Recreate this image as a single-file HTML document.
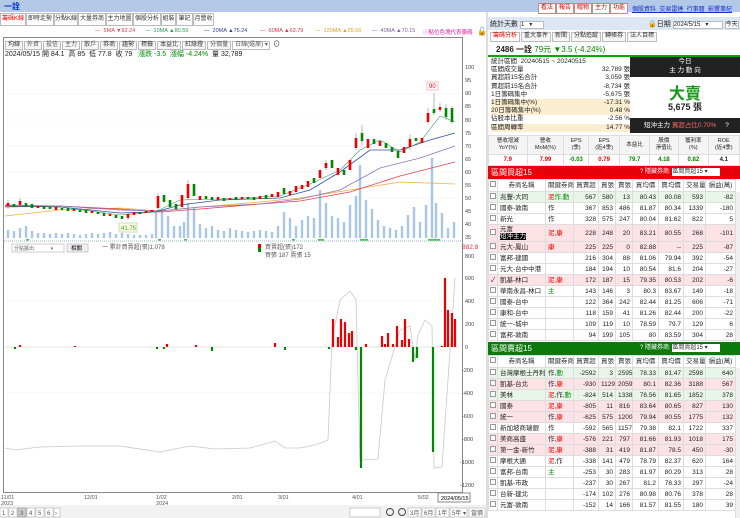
<!DOCTYPE html><html><head><meta charset="utf-8"><style>
*{margin:0;padding:0;box-sizing:border-box}
body{width:740px;height:518px;overflow:hidden;background:#fff;font-family:"Liberation Sans","Noto Sans CJK TC",sans-serif;font-size:7px;color:#222;position:relative}
.a{position:absolute;white-space:nowrap}
.tab{position:absolute;top:13px;height:13px;border:1px solid #bbb;background:#fff;font-size:6px;line-height:11px;text-align:center;color:#333;white-space:nowrap;overflow:hidden}
.tb{display:inline-block;border:1px solid #bbb;padding:0 2px;margin-right:1px;height:9px;line-height:7px;font-size:6px;color:#555;background:#f7f7f7}
table{border-collapse:collapse;font-size:6.5px}
td{border:1px solid #ddd;height:11px;line-height:9px;padding:0 2px;text-align:right;white-space:nowrap}
td.n{text-align:left}
td.c{text-align:center;padding:0}
.ck{display:inline-block;width:6px;height:6px;border:1px solid #999;background:#fff}
.r{color:#e00}.g{color:#080}
.pk td{background:#fde3e6}.gn td{background:#eaf5ea}
.hd td{text-align:center;color:#333;background:#fff;height:12px}
.btn{position:absolute;top:3px;height:11px;width:18px;background:#fff;border:1px solid #c88;color:#d00;font-size:6px;line-height:9px;text-align:center}
</style></head><body>
<!-- top bar -->
<div class="a" style="left:0;top:0;width:740px;height:12px;background:#b4c9e8"></div>
<div class="a" style="left:4px;top:1px;font-size:8px;color:#0033cc;font-weight:bold">一詮</div>
<!-- tabs -->
<div class="tab r" style="left:0;width:26px;color:#e00">籌碼K線</div>
<div class="tab" style="left:26px;width:28px">即時走勢</div>
<div class="tab" style="left:54px;width:24px">分點K線</div>
<div class="tab" style="left:78px;width:28px">大量券商</div>
<div class="tab" style="left:106px;width:27px">主力地圖</div>
<div class="tab" style="left:133px;width:28px">個股分析</div>
<div class="tab" style="left:161px;width:15px">組裝</div>
<div class="tab" style="left:176px;width:17px">筆記</div>
<div class="tab" style="left:193px;width:21px">月營收</div>
<!-- MA legend -->
<div class="a" style="top:28px;left:95px;font-size:5.5px;color:#e04050">— &nbsp;5MA ▼82.24</div>
<div class="a" style="top:28px;left:145px;font-size:5.5px;color:#2a9a60">— &nbsp;10MA ▲80.59</div>
<div class="a" style="top:28px;left:204px;font-size:5.5px;color:#3040a0">— &nbsp;20MA ▲75.24</div>
<div class="a" style="top:28px;left:260px;font-size:5.5px;color:#e03050">— &nbsp;60MA ▲63.79</div>
<div class="a" style="top:28px;left:315px;font-size:5.5px;color:#e0a020">— &nbsp;120MA ▲55.06</div>
<div class="a" style="top:28px;left:372px;font-size:5.5px;color:#8060b0">— &nbsp;40MA ▲70.15</div>
<div class="a" style="top:28px;left:423px;font-size:5.5px;color:#e020a0">ⓘ點位色塊代表籌碼</div>
<div class="a" style="top:27px;left:477px;font-size:8px">🔓</div>
<!-- chart box -->
<div class="a" style="left:3px;top:37px;width:460px;height:456px;border:1px solid #888"></div>
<div class="a" style="left:5px;top:39px"><span class="tb" style="color:#333">均線</span><span class="tb">外資</span><span class="tb">投信</span><span class="tb">主力</span><span class="tb">散戶</span><span class="tb" style="color:#333">券商</span><span class="tb" style="color:#333">趨勢</span><span class="tb" style="color:#333">標籤</span><span class="tb" style="color:#333">本益比</span><span class="tb" style="color:#333">紅綠燈</span><span class="tb">分價量</span><span class="tb" style="width:38px;background:#fff">日線(還原) ▾</span> ⊙</div>
<div class="a" style="left:5px;top:49px;font-size:7px">2024/05/15 開 84.1 &nbsp;高 85 &nbsp;低 77.8 &nbsp;收 79 &nbsp;&nbsp;<span class="g">漲跌 -3.5 &nbsp;漲幅 -4.24%</span> &nbsp;量 32,789</div>
<svg class="a" style="left:0;top:0" width="487" height="518">
<g stroke="#f0f0f0" stroke-width="0.6"><line x1="5" y1="93.7" x2="460" y2="93.7"/><line x1="5" y1="120" x2="460" y2="120"/><line x1="5" y1="146" x2="460" y2="146"/><line x1="5" y1="172" x2="460" y2="172"/><line x1="5" y1="198" x2="460" y2="198"/><line x1="5" y1="301" x2="460" y2="301"/><line x1="5" y1="393" x2="460" y2="393"/></g>
<path stroke="#a8c6e6" stroke-width="2.4" fill="none" d="M8 238V230M14 238V231M20 238V228M26 238V226M32 238V231M38 238V233M44 238V233M50 238V234M56 238V233M62 238V234M68 238V233M74 238V234M80 238V235M86 238V234M92 238V233M98 238V234M104 238V233M110 238V232M116 238V234M122 238V233M128 238V234M134 238V235M140 238V235M146 238V235M152 238V234M156 238V212M162 238V210M168 238V216M174 238V226M180 238V226M184 238V222M188 238V203M194 238V208M200 238V224M206 238V228M212 238V226M218 238V230M224 238V231M230 238V228M236 238V230M242 238V231M248 238V232M254 238V231M260 238V230M266 238V231M272 238V232M278 238V226M284 238V212M290 238V218M296 238V226M302 238V220M308 238V216M314 238V218M320 238V190M326 238V203M332 238V216M338 238V218M344 238V222M350 238V205M356 238V196M360 238V165M366 238V200M372 238V209M378 238V220M384 238V226M390 238V228M396 238V230M402 238V226M408 238V215M414 238V207M420 238V222M426 238V205M432 238V158M436 238V203M442 238V213M448 238V228M454 238V222"/>
<polyline fill="none" stroke="#f0b040" stroke-width="0.8" points="5,216 60,210 120,208 160,211 200,207 260,202 300,198 350,190 400,182 455,184"/>
<polyline fill="none" stroke="#e04050" stroke-width="0.8" points="5,207 60,206 120,209 160,212 200,209 260,204 300,201 350,192 400,176 455,162"/>
<polyline fill="none" stroke="#9070c0" stroke-width="0.8" points="5,205 60,206 120,210 160,211 200,207 260,204 300,199 340,190 380,168 420,158 455,146"/>
<polyline fill="none" stroke="#3050a0" stroke-width="0.8" points="5,206 60,207 120,213 155,212 180,205 220,200 280,198 310,190 340,172 370,150 400,150 430,140 455,133"/>
<polyline fill="none" stroke="#3a9a6a" stroke-width="0.6" points="5,205 60,207 120,215 155,212 180,200 220,199 280,196 310,184 340,170 360,150 380,140 400,152 420,142 440,116 455,122"/>
<path stroke="#888" stroke-width="0.6" d="M8 200V209M20 198V207M128 212V220M158 193V210M188 180V200M356 133V150M362 125V145M434 93V115M440 103V112M446 104V120M452 106V124M326 160V170M410 134V150M428 108V124"/>
<path stroke="#e00" stroke-width="2.6" d="M8 203V206M20 201V205M38 206V208M56 207V210M74 209V211M92 211V213M110 214V216M128 214V218M134 212V215M146 211V213M152 210V212M158 196V208M182 195V207M188 184V198M200 196V200M218 197V200M230 198V200M242 197V199M260 196V199M272 194V197M278 192V197M290 191V195M296 186V192M302 185V189M308 181V187M320 170V178M326 163V168M338 168V175M350 160V170M356 138V148M368 139V148M380 141V146M404 147V153M410 139V147M422 138V143M428 113V122M440 107V110"/>
<path stroke="#080" stroke-width="2.6" d="M14 204V207M26 203V206M32 204V208M44 206V209M50 207V209M62 208V210M68 208V211M80 210V212M86 210V213M98 212V214M104 213V216M116 215V218M122 216V219M140 212V214M164 195V202M170 200V207M176 204V209M194 184V196M206 196V199M212 197V200M224 198V201M236 197V200M248 197V199M254 197V200M266 195V199M284 188V194M314 178V183M332 160V168M344 170V175M362 133V141M374 139V144M386 143V148M392 147V152M398 151V158M416 138V141M434 109V113M446 108V117M452 108V122"/>
<rect x="119" y="223" width="18" height="9" fill="#fffbe0" stroke="#cdb"/><text x="121" y="230" font-size="6" fill="#3a3">41.75</text>
<rect x="427" y="82" width="11" height="8" fill="#fff" stroke="#fbb"/><text x="429" y="88" font-size="6" fill="#e00">90</text>
<g fill="#4c4"><rect x="26" y="239" width="3" height="2"/><rect x="158" y="239" width="3" height="2"/><rect x="184" y="239" width="3" height="2"/><rect x="292" y="239" width="3" height="2"/><rect x="318" y="239" width="6" height="2"/><rect x="360" y="239" width="8" height="2"/><rect x="428" y="239" width="12" height="2"/></g>
<line x1="4" y1="241" x2="462" y2="241" stroke="#bcd" stroke-width="1.5" stroke-dasharray="1,1"/>
<g font-size="5.5" fill="#444"><text x="465" y="69">100</text><text x="465" y="82">95</text><text x="465" y="95">90</text><text x="465" y="108">85</text><text x="465" y="122">80</text><text x="465" y="135">75</text><text x="465" y="148">70</text><text x="465" y="161">65</text><text x="465" y="174">60</text><text x="465" y="187">55</text><text x="465" y="200">50</text><text x="465" y="213">45</text><text x="465" y="226">40</text><text x="465" y="239">35</text>
<text x="465" y="258">800</text><text x="465" y="280">600</text><text x="465" y="303">400</text><text x="465" y="326">200</text><text x="465" y="349">0</text><text x="462" y="372">-200</text><text x="462" y="395">-400</text><text x="462" y="418">-600</text><text x="462" y="441">-800</text><text x="460" y="464">-1000</text><text x="460" y="487">-1200</text></g>
<text x="462" y="249" font-size="6.5" fill="#d33">882.8</text>
<line x1="5" y1="347" x2="460" y2="347" stroke="#ccc" stroke-width="0.6"/>
<polyline fill="none" stroke="#c8c8c8" stroke-width="0.8" points="5,448 15,450 40,447 80,446 120,446 160,452 190,446 215,449 250,448 275,441 285,448 300,448 315,445 328,440 332,340 340,300 350,291 356,300 360,460 378,459 385,380 400,330 410,326 415,360 418,335 425,320 432,326 434,468 442,467 455,278"/>
<path stroke="#e00" stroke-width="2.2" d="M333 347V319M338 347V337M341 347V319M345 347V322M349 347V333M352 347V331M366 347V344M382 347V336M385 347V344M388 347V333M393 347V344M397 347V326M402 347V340M405 347V319M409 347V339M442 347V346M445 347V278M448 347V310M452 347V313M455 347V319M275 347V343M167 347V344M20 347V345M75 347V346M196 347V345"/>
<path stroke="#080" stroke-width="2.2" d="M361 347V468M356 347V350M413 347V362M417 347V358M433 347V452M15 347V349M157 347V349M164 347V349M212 347V351M285 347V350M329 347V349"/>
<rect x="12" y="244" width="52" height="8" fill="#fff" stroke="#ccc"/><text x="14" y="250" font-size="5" fill="#666">分點擺出 &#160;&#160;&#160;&#160;&#160;&#160;&#160;&#160;&#160;&#160;&#160;▾</text>
<rect x="67" y="244" width="21" height="8" fill="#eee" stroke="#ccc"/><text x="71" y="250" font-size="5.5">相關</text>
<text x="102" y="249" font-size="6" fill="#555">一 累計買賣超(張)1,078</text>
<rect x="258" y="244" width="3" height="4" fill="#e00"/><rect x="258" y="248" width="3" height="4" fill="#080"/>
<text x="265" y="249" font-size="6" fill="#555">買賣超(張)172</text><text x="265" y="257" font-size="6" fill="#555">買張 187 賣張 15</text>
<g font-size="5.5" fill="#555"><text x="1" y="499">11/01</text><text x="1" y="505">2023</text><text x="84" y="499">12/01</text><text x="156" y="499">1/02</text><text x="156" y="505">2024</text><text x="232" y="499">2/01</text><text x="278" y="499">3/01</text><text x="352" y="499">4/01</text><text x="418" y="499">5/02</text></g>
<rect x="438" y="493" width="32" height="9" fill="#fff" stroke="#888"/><text x="441" y="500" font-size="5.5">2024/05/15</text>
<rect x="0" y="505" width="487" height="13" fill="#f2f2f2"/>
<g font-size="6" fill="#555"><rect x="0" y="508" width="8" height="9" fill="#fff" stroke="#ccc"/><text x="2" y="515">1</text><rect x="9" y="508" width="8" height="9" fill="#fff" stroke="#ccc"/><text x="11" y="515">2</text><rect x="18" y="508" width="8" height="9" fill="#ccc" stroke="#aaa"/><text x="20" y="515">3</text><rect x="27" y="508" width="8" height="9" fill="#fff" stroke="#ccc"/><text x="29" y="515">4</text><rect x="36" y="508" width="8" height="9" fill="#fff" stroke="#ccc"/><text x="38" y="515">5</text><rect x="45" y="508" width="8" height="9" fill="#fff" stroke="#ccc"/><text x="47" y="515">6</text><rect x="54" y="508" width="6" height="9" fill="#fff" stroke="#ccc"/><text x="55" y="515">›</text>
<rect x="350" y="508" width="30" height="9" fill="#fff" stroke="#ccc"/><circle cx="390" cy="512" r="3.5" fill="none" stroke="#444"/><circle cx="402" cy="512" r="3.5" fill="none" stroke="#444"/>
<rect x="408" y="508" width="13" height="9" fill="#fff" stroke="#ccc"/><text x="410" y="515">3月</text><rect x="422" y="508" width="13" height="9" fill="#fff" stroke="#ccc"/><text x="424" y="515">6月</text><rect x="436" y="508" width="13" height="9" fill="#fff" stroke="#ccc"/><text x="438" y="515">1年</text><rect x="450" y="508" width="17" height="9" fill="#fff" stroke="#ccc"/><text x="452" y="515">5年 ▾</text><rect x="469" y="508" width="16" height="9" fill="#fff" stroke="#ccc"/><text x="471" y="515">當價</text></g>
</svg>
<div class="a" style="left:486px;top:12px;width:2px;height:506px;background:#ddd"></div>

<!-- RIGHT PANEL -->
<div class="btn" style="left:538px">看法</div><div class="btn" style="left:556px">報告</div><div class="btn" style="left:574px">贈物</div><div class="btn" style="left:592px">主力</div><div class="btn" style="left:610px">功能</div>
<div class="a" style="left:632px;top:4px;font-size:6px;color:#13c;text-decoration:underline">個股資料 &nbsp;交易雷達 &nbsp;行事曆 &nbsp;影響事紀</div>
<div class="a" style="left:488px;top:17px;width:252px;height:13px;background:#dde7f3"></div>
<div class="a" style="left:490px;top:19px;font-size:7px">統計天數 <span style="display:inline-block;width:24px;height:8px;background:#fff;border:1px solid #bbb;font-size:6px;line-height:6px">1 &nbsp;&nbsp;▾</span></div>
<div class="a" style="left:648px;top:19px;font-size:7px">🔒日期 <span style="display:inline-block;width:50px;height:8px;background:#fff;border:1px solid #bbb;font-size:6px;line-height:6px">2024/5/15 &nbsp;&nbsp;▾</span> <span style="display:inline-block;width:14px;height:8px;background:#fff;border:1px solid #bbb;font-size:6px;line-height:6px">今天</span></div>
<div class="a" style="left:490px;top:32px;font-size:6.5px"><span class="tb" style="color:#e00;background:#fff;height:10px">籌碼分析</span><span class="tb" style="color:#333;height:10px">重大事件</span><span class="tb" style="color:#333;height:10px">新聞</span><span class="tb" style="color:#333;height:10px">分點追蹤</span><span class="tb" style="color:#333;height:10px">轉帳券</span><span class="tb" style="color:#333;height:10px">法人目標</span></div>
<div class="a" style="left:496px;top:44px;font-size:8px;font-weight:bold">2486 一詮 <span class="g" style="font-weight:normal">79元 ▼3.5 (-4.24%)</span></div>
<div class="a" style="left:488px;top:55px;width:252px;height:2px;background:#0a0"></div>
<div class="a" style="left:491px;top:58px;font-size:6.5px;line-height:8.2px;width:139px">
<div>統計區間 &nbsp;20240515 ~ 20240515</div>
<div>區間成交量<span style="float:right">32,789 張</span></div>
<div>買超前15名合計<span style="float:right">3,059 張</span></div>
<div>賣超前15名合計<span style="float:right">-8,734 張</span></div>
<div>1日籌碼集中<span style="float:right">-5,675 張</span></div>
<div style="background:#fbeed0">1日籌碼集中(%)<span style="float:right">-17.31 %</span></div>
<div style="background:#fbeed0">20日籌碼集中(%)<span style="float:right">0.48 %</span></div>
<div>佔股本比重<span style="float:right">-2.56 %</span></div>
<div style="background:#fbeed0">區間周轉率<span style="float:right">14.77 %</span></div></div>
<div class="a" style="left:630px;top:57px;width:110px;height:20px;background:#222;color:#fff;text-align:center;font-size:6.5px;line-height:9px">今日<br>主 力 動 向</div>
<div class="a" style="left:630px;top:80px;width:110px;text-align:center;font-size:16px;font-weight:bold;color:#1a9a1a">大賣</div>
<div class="a" style="left:630px;top:100px;width:110px;text-align:center;font-size:9px;font-weight:bold">5,675 張</div>
<div class="a" style="left:630px;top:118px;width:110px;height:15px;background:#222;color:#fff;font-size:6.5px;line-height:15px;padding-left:14px">短沖主力 <span style="color:#f66">買超占比0.70%</span> &nbsp;&nbsp;&nbsp;&nbsp;?</div>
<div class="a" style="left:488px;top:135px">
<table style="width:252px;font-size:5.5px;text-align:center"><tr style="background:#f4f4f4"><td class="c" style="height:19px;line-height:7px">營收增減<br>YoY(%)</td><td class="c" style="line-height:7px">營收<br>MoM(%)</td><td class="c" style="line-height:7px">EPS<br>(季)</td><td class="c" style="line-height:7px">EPS<br>(近4季)</td><td class="c">本益比</td><td class="c" style="line-height:7px">股價<br>淨值比</td><td class="c" style="line-height:7px">獲利率<br>(%)</td><td class="c" style="line-height:7px">ROE<br>(近4季)</td></tr>
<tr style="font-weight:bold;font-size:6px"><td class="c r">7.9</td><td class="c r">7.99</td><td class="c g">-0.03</td><td class="c r">0.79</td><td class="c g">79.7</td><td class="c g">4.18</td><td class="c g">0.82</td><td class="c">4.1</td></tr></table></div>
<!-- buy table -->
<div class="a" style="left:488px;top:166px;width:252px;height:13px;background:#e8000a;color:#fff;font-size:8px;line-height:13px;padding-left:3px">區間買超15<span style="position:absolute;left:152px;font-size:6px">? 隱藏券商: <span style="display:inline-block;width:48px;height:8px;background:#fff;color:#333;line-height:8px">區間買超15 ▾</span></span></div>
<div class="a" style="left:488px;top:179px">
<table style="width:247px;table-layout:fixed"><col style="width:9px"><col style="width:48px"><col style="width:28px"><col style="width:25px"><col style="width:17px"><col style="width:17px"><col style="width:26px"><col style="width:25px"><col style="width:22px"><col style="width:30px">
<tr class="hd"><td class="c"><span class="ck"></span></td><td>券商名稱</td><td>關鍵券商</td><td>買賣超</td><td>買張</td><td>賣張</td><td>買均價</td><td>賣均價</td><td>交易量</td><td>損益(萬)</td></tr>
<tr class="gn"><td class="c"><span class="ck"></span></td><td class="n">兆豐-大同</td><td class="n"><span class="r">泥</span><span class="g">作,動</span></td><td>567</td><td>580</td><td>13</td><td>80.43</td><td>80.08</td><td>593</td><td>-82</td></tr>
<tr><td class="c"><span class="ck"></span></td><td class="n">國泰-敦南</td><td class="n">作</td><td>367</td><td>853</td><td>486</td><td>81.87</td><td>80.34</td><td>1339</td><td>-180</td></tr>
<tr><td class="c"><span class="ck"></span></td><td class="n">新光</td><td class="n">作</td><td>328</td><td>575</td><td>247</td><td>80.04</td><td>81.62</td><td>822</td><td>5</td></tr>
<tr class="pk"><td class="c" style="height:17px"><span class="ck"></span></td><td class="n" style="line-height:7px">元富<br><span style="background:#000;color:#fff">短沖主力</span></td><td class="n r">泥,康</td><td>228</td><td>248</td><td>20</td><td>83.21</td><td>80.55</td><td>268</td><td>-101</td></tr>
<tr class="pk"><td class="c"><span class="ck"></span></td><td class="n">元大-鳳山</td><td class="n r">康</td><td>225</td><td>225</td><td>0</td><td>82.88</td><td>--</td><td>225</td><td>-87</td></tr>
<tr><td class="c"><span class="ck"></span></td><td class="n">富邦-建國</td><td></td><td>216</td><td>304</td><td>88</td><td>81.06</td><td>79.94</td><td>392</td><td>-54</td></tr>
<tr><td class="c"><span class="ck"></span></td><td class="n">元大-台中中港</td><td></td><td>184</td><td>194</td><td>10</td><td>80.54</td><td>81.6</td><td>204</td><td>-27</td></tr>
<tr class="pk"><td class="c">✓</td><td class="n">凱基-林口</td><td class="n r">泥,康</td><td>172</td><td>187</td><td>15</td><td>79.35</td><td>80.53</td><td>202</td><td>-6</td></tr>
<tr><td class="c"><span class="ck"></span></td><td class="n">華南永昌-林口</td><td class="n g">主</td><td>143</td><td>146</td><td>3</td><td>80.3</td><td>83.67</td><td>149</td><td>-18</td></tr>
<tr><td class="c"><span class="ck"></span></td><td class="n">國泰-台中</td><td></td><td>122</td><td>364</td><td>242</td><td>82.44</td><td>81.25</td><td>606</td><td>-71</td></tr>
<tr><td class="c"><span class="ck"></span></td><td class="n">康和-台中</td><td></td><td>118</td><td>159</td><td>41</td><td>81.26</td><td>82.44</td><td>200</td><td>-22</td></tr>
<tr><td class="c"><span class="ck"></span></td><td class="n">統一-城中</td><td></td><td>109</td><td>119</td><td>10</td><td>78.59</td><td>79.7</td><td>129</td><td>6</td></tr>
<tr><td class="c"><span class="ck"></span></td><td class="n">富邦-敦南</td><td></td><td>94</td><td>199</td><td>105</td><td>80</td><td>83.59</td><td>304</td><td>28</td></tr>
</table></div>
<!-- sell table -->
<div class="a" style="left:488px;top:342px;width:252px;height:13px;background:#0a7a0a;color:#fff;font-size:8px;line-height:13px;padding-left:3px">區間賣超15<span style="position:absolute;left:152px;font-size:6px">? 隱藏券商: <span style="display:inline-block;width:48px;height:8px;background:#fff;color:#333;line-height:8px">區間賣超15 ▾</span></span></div>
<div class="a" style="left:488px;top:355px">
<table style="width:247px;table-layout:fixed"><col style="width:9px"><col style="width:48px"><col style="width:28px"><col style="width:25px"><col style="width:17px"><col style="width:17px"><col style="width:26px"><col style="width:25px"><col style="width:22px"><col style="width:30px">
<tr class="hd"><td class="c"><span class="ck"></span></td><td>券商名稱</td><td>關鍵券商</td><td>買賣超</td><td>買張</td><td>賣張</td><td>買均價</td><td>賣均價</td><td>交易量</td><td>損益(萬)</td></tr>
<tr class="gn"><td class="c"><span class="ck"></span></td><td class="n">台灣摩根士丹利</td><td class="n">作,<span class="g">動</span></td><td>-2592</td><td>3</td><td>2595</td><td>78.33</td><td>81.47</td><td>2598</td><td>640</td></tr>
<tr class="pk"><td class="c"><span class="ck"></span></td><td class="n">凱基-台北</td><td class="n">作,<span class="r">康</span></td><td>-930</td><td>1129</td><td>2059</td><td>80.1</td><td>82.36</td><td>3188</td><td>567</td></tr>
<tr class="gn"><td class="c"><span class="ck"></span></td><td class="n">美林</td><td class="n"><span class="r">泥</span>,作,<span class="g">動</span></td><td>-824</td><td>514</td><td>1338</td><td>78.56</td><td>81.65</td><td>1852</td><td>378</td></tr>
<tr class="pk"><td class="c"><span class="ck"></span></td><td class="n">國泰</td><td class="n r">泥,康</td><td>-805</td><td>11</td><td>816</td><td>83.64</td><td>80.65</td><td>827</td><td>130</td></tr>
<tr class="pk"><td class="c"><span class="ck"></span></td><td class="n">統一</td><td class="n">作,<span class="r">康</span></td><td>-625</td><td>575</td><td>1200</td><td>79.94</td><td>80.55</td><td>1775</td><td>132</td></tr>
<tr><td class="c"><span class="ck"></span></td><td class="n">新加坡商瑞銀</td><td class="n">作</td><td>-592</td><td>565</td><td>1157</td><td>79.38</td><td>82.1</td><td>1722</td><td>337</td></tr>
<tr class="pk"><td class="c"><span class="ck"></span></td><td class="n">美商高盛</td><td class="n">作,<span class="r">康</span></td><td>-576</td><td>221</td><td>797</td><td>81.66</td><td>81.93</td><td>1018</td><td>175</td></tr>
<tr class="pk"><td class="c"><span class="ck"></span></td><td class="n">第一金-新竹</td><td class="n r">泥,康</td><td>-388</td><td>31</td><td>419</td><td>81.87</td><td>78.5</td><td>450</td><td>-30</td></tr>
<tr><td class="c"><span class="ck"></span></td><td class="n">摩根大通</td><td class="n"><span class="r">泥</span>,作</td><td>-338</td><td>141</td><td>479</td><td>78.79</td><td>82.37</td><td>620</td><td>164</td></tr>
<tr><td class="c"><span class="ck"></span></td><td class="n">富邦-台南</td><td class="n g">主</td><td>-253</td><td>30</td><td>283</td><td>81.97</td><td>80.29</td><td>313</td><td>28</td></tr>
<tr><td class="c"><span class="ck"></span></td><td class="n">凱基-市政</td><td></td><td>-237</td><td>30</td><td>267</td><td>81.2</td><td>78.33</td><td>297</td><td>-24</td></tr>
<tr><td class="c"><span class="ck"></span></td><td class="n">台新-建北</td><td></td><td>-174</td><td>102</td><td>276</td><td>80.98</td><td>80.76</td><td>378</td><td>28</td></tr>
<tr><td class="c"><span class="ck"></span></td><td class="n">元富-敦南</td><td></td><td>-152</td><td>14</td><td>166</td><td>81.57</td><td>81.55</td><td>180</td><td>39</td></tr>
</table></div>
<div class="a" style="left:735px;top:192px;width:5px;height:150px;background:#f0f0f0;border-left:1px solid #ddd"></div>
<div class="a" style="left:735px;top:368px;width:5px;height:150px;background:#f0f0f0;border-left:1px solid #ddd"></div>
</body></html>
